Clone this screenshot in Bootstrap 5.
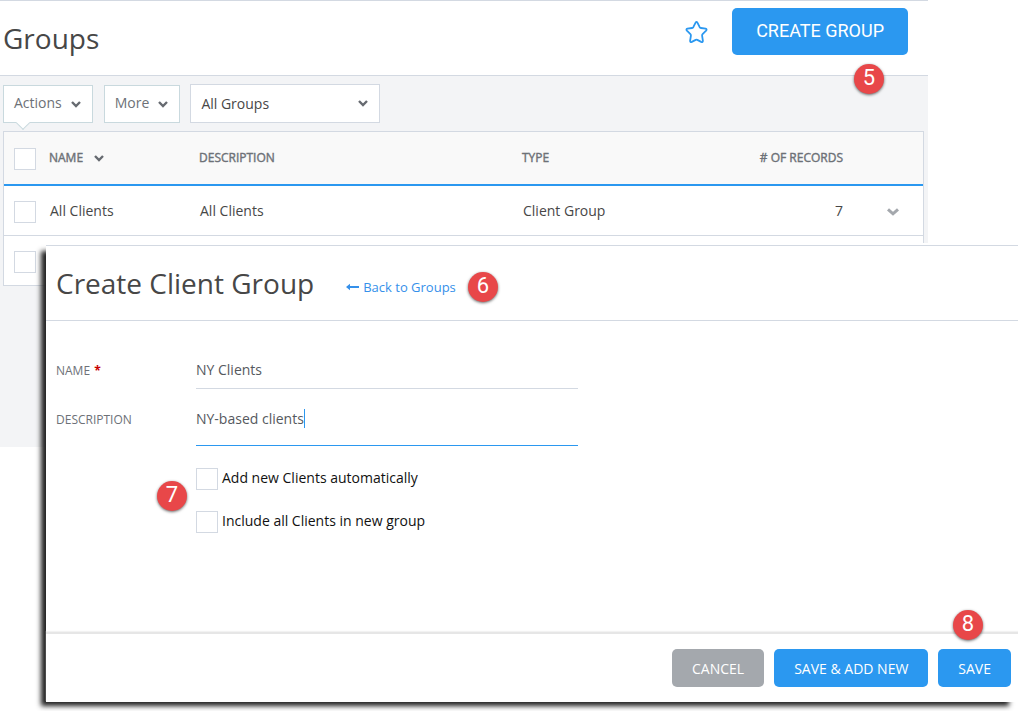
<!DOCTYPE html>
<html lang="en">
<head>
<meta charset="utf-8">
<meta name="viewport" content="width=device-width, initial-scale=1">
<title>Groups</title>
<link href="https://cdn.jsdelivr.net/npm/bootstrap@5.3.0/dist/css/bootstrap.min.css" rel="stylesheet">
<style>
  :root { --line: #d3d9e2; --blue: #2b98f0; --ink: #474747; --muted: #6d7177; }
  body { font-family: "Open Sans", sans-serif; font-size: 14px; line-height: 20px; color: var(--ink); background: #fff; }
  h1, h2 { font-size: 28px; line-height: 38px; font-weight: 400; margin: 0; color: var(--ink); }

  /* the dialog is stacked over the list page in one grid cell */
  .stack { display: grid; grid-template-columns: minmax(0, 1fr); align-items: start; overflow: hidden; }
  .stack > * { grid-area: 1 / 1; }
  .list-page { margin-right: 90px; min-height: 447px; background: #f3f4f6; }
  .page-head { height: 76px; padding: 0 20px 0 3px; background: #fff; border-top: 1px solid var(--line); border-bottom: 1px solid var(--line); }
  .head-tools { padding-bottom: 13px; }

  .btn { --bs-btn-border-radius: 5px; border: 0; font-size: 14px; line-height: 20px; }
  .btn-blue, .btn-blue:hover { background: var(--blue); color: #fff; }
  .btn-gray, .btn-gray:hover { background: #a4a8ad; color: #fff; }
  .btn-create { font-family: Roboto, sans-serif; font-size: 18px; padding: 13px 24px 14px; }
  .btn-foot { padding: 10px 20px 8px; }

  .tools { padding: 8px 4px 8px 3px; }
  .list-body { padding: 0 4px 0 3px; }
  .btn-drop { position: relative; height: 38px; padding: 0 11px 2px 10px; border: 1px solid #c9d9de; border-radius: 0; background: #fff; color: var(--muted); gap: 9px; }
  .btn-drop + .btn-drop { margin-left: 11px; }
  .btn-drop svg { margin-top: 4px; }
  .notched::after { content: ""; position: absolute; left: 14px; bottom: -6px; width: 10px; height: 10px; background: #fff; border: solid #c9d9de; border-width: 0 1px 1px 0; transform: rotate(45deg); }
  .form-select { width: 190px; height: 39px; margin-left: 10px; padding: 0 30px 0 10px; font-size: 14px; color: var(--ink); border: 1px solid var(--line); border-radius: 0; background-color: #fff;
    background-image: url("data:image/svg+xml,%3Csvg xmlns='http://www.w3.org/2000/svg' viewBox='0 0 10 7'%3E%3Cpath d='M1 1l4 4 4-4' fill='none' stroke='%23666a70' stroke-width='2.4'/%3E%3C/svg%3E");
    background-size: 10px 7px; background-position: right 11px center; }

  .form-check-input { width: 22px; height: 22px; margin: 0; float: none; border: 1px solid var(--line); flex: none; display: block; }
  .form-check-input[type=checkbox] { border-radius: 0; }

  .group-table { table-layout: fixed; width: 100%; margin: 0; background: #fff; border: 1px solid var(--line); border-collapse: separate; border-spacing: 0; color: var(--ink); }
  .group-table th { height: 54px; padding: 0 0 0 5px; font-size: 12px; font-weight: 400; -webkit-text-stroke: 0.4px; color: var(--muted); background: #f9f9f9; border-bottom: 2px solid var(--blue); }
  .group-table td { height: 50px; padding: 0 0 0 6px; border-bottom: 1px solid var(--line); }
  .group-table tr:last-child td { height: 49px; border-bottom: 0; }
  .group-table .pick { padding: 3px 0 0 10px; }
  .group-table th.pick { padding-top: 1px; }
  .group-table .count { text-align: right; padding-right: 20px; }
  .plain { border: 0; background: none; padding: 0; display: inline-flex; }

  .panel { margin: 243px 0 9px 46px; padding-top: 2px; background: #fff; box-shadow: -7px 6px 5px -2px #222; position: relative; }
  .panel-head { height: 76px; padding-left: 10px; border-top: 1px solid var(--line); border-bottom: 1px solid var(--line); }
  .back { color: #3590ea; font-size: 13px; text-decoration: none; gap: 4px; margin-right: 12px; }
  .panel-form { padding: 37px 10px 99px; }
  .panel-form .name-label { width: 140px; flex: none; padding-top: 3px; font-size: 12px; color: var(--muted); }
  .star-req { color: #c80000; font-weight: 700; margin-left: 1px; }
  .field { width: 382px; }
  .field .form-control { font-family: inherit; font-size: 14px; line-height: 20px; color: #55595e; padding: 2px 0 8px; min-height: 0; border: 0; border-bottom: 1px solid var(--line); border-radius: 0; background: none; display: block; }
  .field .form-control.active { padding-bottom: 16px; border-bottom-color: var(--blue); }
  .desc-row { margin-top: 18px; }
  .caret-mark { position: absolute; left: 108px; top: 2px; width: 1px; height: 19px; background: var(--blue); }
  .checks { margin: 22px 0 0 140px; gap: 21px; color: #111; position: relative; }
  .panel-foot { padding: 15px 7px 15px; gap: 10px; border-top: 2px solid #e6e6e6; box-shadow: 0 -1px 1px #f2f2f2; }

  .callout { width: 30px; height: 30px; border-radius: 50%; background: #e84749; color: #fff; font: 22px/28px Roboto, sans-serif; text-align: center; box-shadow: 0 1px 3px rgba(0,0,0,.6); flex: none; z-index: 2; }
  .over { position: absolute; }
  .over-create { right: 24px; top: 63px; }
  .over-checks { left: -39px; top: 13px; }
  .over-save { right: 28px; bottom: 47px; }
</style>
</head>
<body>
<div class="stack">
  <main class="list-page">
    <header class="page-head d-flex align-items-center justify-content-between">
      <h1>Groups</h1>
      <div class="head-tools d-flex align-items-center gap-4 position-relative h-100">
        <button class="plain" type="button" aria-label="Add to favorites">
          <svg width="23" height="24" viewBox="0 0 23 24" fill="none" stroke="#2b98f0" stroke-width="1.8" stroke-linejoin="round"><path d="M10.6 2.6Q11.5 1 12.4 2.6L14.7 7.2Q15.1 7.9 15.9 8L20.6 8.7Q22.3 9.2 21.1 10.6L17.6 14.2Q17 14.8 17.1 15.6L17.9 20.8Q17.9 22.6 16.2 21.9L12.3 19.9Q11.5 19.5 10.7 19.9L6.8 21.9Q5.1 22.6 5.1 20.8L5.9 15.6Q6 14.8 5.4 14.2L1.9 10.6Q.7 9.2 2.4 8.7L7.1 8Q7.9 7.9 8.3 7.2Z"/></svg>
        </button>
        <button class="btn btn-blue btn-create" type="button">CREATE GROUP</button>
        <div class="callout over over-create">5</div>
      </div>
    </header>

    <div class="tools d-flex align-items-center">
      <button class="btn btn-drop notched d-flex align-items-center" type="button">Actions
        <svg width="10" height="7" viewBox="0 0 10 7" fill="none" stroke="#666a70" stroke-width="2.4"><path d="M1 1l4 4 4-4"/></svg>
      </button>
      <button class="btn btn-drop d-flex align-items-center" type="button">More
        <svg width="10" height="7" viewBox="0 0 10 7" fill="none" stroke="#666a70" stroke-width="2.4"><path d="M1 1l4 4 4-4"/></svg>
      </button>
      <select class="form-select" aria-label="Group filter"><option>All Groups</option></select>
    </div>

    <div class="list-body">
      <table class="group-table">
        <colgroup><col style="width:40px"><col style="width:150px"><col><col style="width:206px"><col style="width:140px"><col style="width:60px"></colgroup>
        <thead>
          <tr>
            <th class="pick"><input class="form-check-input" type="checkbox" aria-label="Select all groups"></th>
            <th>NAME <button class="plain ms-1 ps-1" type="button" aria-label="Sort by name"><svg width="10" height="7" viewBox="0 0 10 7" fill="none" stroke="#666a70" stroke-width="2.4"><path d="M1 1l4 4 4-4"/></svg></button></th>
            <th>DESCRIPTION</th>
            <th>TYPE</th>
            <th class="count">#&nbsp;OF RECORDS</th>
            <th></th>
          </tr>
        </thead>
        <tbody>
          <tr>
            <td class="pick"><input class="form-check-input" type="checkbox" aria-label="Select All Clients"></td>
            <td>All Clients</td>
            <td>All Clients</td>
            <td>Client Group</td>
            <td class="count">7</td>
            <td class="text-center p-0"><button class="plain" type="button" aria-label="Row menu"><svg width="12" height="8" viewBox="0 0 12 8" fill="none" stroke="#a4a8ad" stroke-width="3"><path d="M1 1.3l5 4.5 5-4.5"/></svg></button></td>
          </tr>
          <tr>
            <td class="pick"><input class="form-check-input" type="checkbox" aria-label="Select group"></td>
            <td></td><td></td><td></td><td></td><td></td>
          </tr>
        </tbody>
      </table>
    </div>
  </main>

  <section class="panel">
    <header class="panel-head d-flex align-items-center">
      <h2>Create Client Group</h2>
      <a class="back d-flex align-items-center ms-4 ps-2 pt-2" href="#">
        <svg width="13" height="8" viewBox="0 0 13 8" fill="#3590ea"><path d="M0 4L4 .8V3h9v2H4v2.2z"/></svg>Back to Groups</a>
      <div class="callout mt-2">6</div>
    </header>

    <form>
      <div class="panel-form">
        <div class="d-flex">
          <label class="name-label" for="group-name">NAME <span class="star-req">*</span></label>
          <div class="field"><input class="form-control" id="group-name" type="text" value="NY Clients"></div>
        </div>
        <div class="desc-row d-flex">
          <label class="name-label" for="group-desc">DESCRIPTION</label>
          <div class="field position-relative">
            <input class="form-control active" id="group-desc" type="text" value="NY-based clients">
            <span class="caret-mark"></span>
          </div>
        </div>
        <div class="checks d-flex flex-column">
          <div class="d-flex gap-1"><input class="form-check-input" type="checkbox" id="auto-add"><label for="auto-add">Add new Clients automatically</label></div>
          <div class="d-flex gap-1"><input class="form-check-input" type="checkbox" id="include-all"><label for="include-all">Include all Clients in new group</label></div>
          <div class="callout over over-checks">7</div>
        </div>
      </div>
      <footer class="panel-foot d-flex justify-content-end">
        <button class="btn btn-gray btn-foot" type="button">CANCEL</button>
        <button class="btn btn-blue btn-foot" type="button">SAVE &amp; ADD NEW</button>
        <div class="position-relative">
          <button class="btn btn-blue btn-foot" type="button">SAVE</button>
          <div class="callout over over-save">8</div>
        </div>
      </footer>
    </form>
  </section>
</div>
<script src="https://cdn.jsdelivr.net/npm/bootstrap@5.3.0/dist/js/bootstrap.bundle.min.js"></script>
</body>
</html>
